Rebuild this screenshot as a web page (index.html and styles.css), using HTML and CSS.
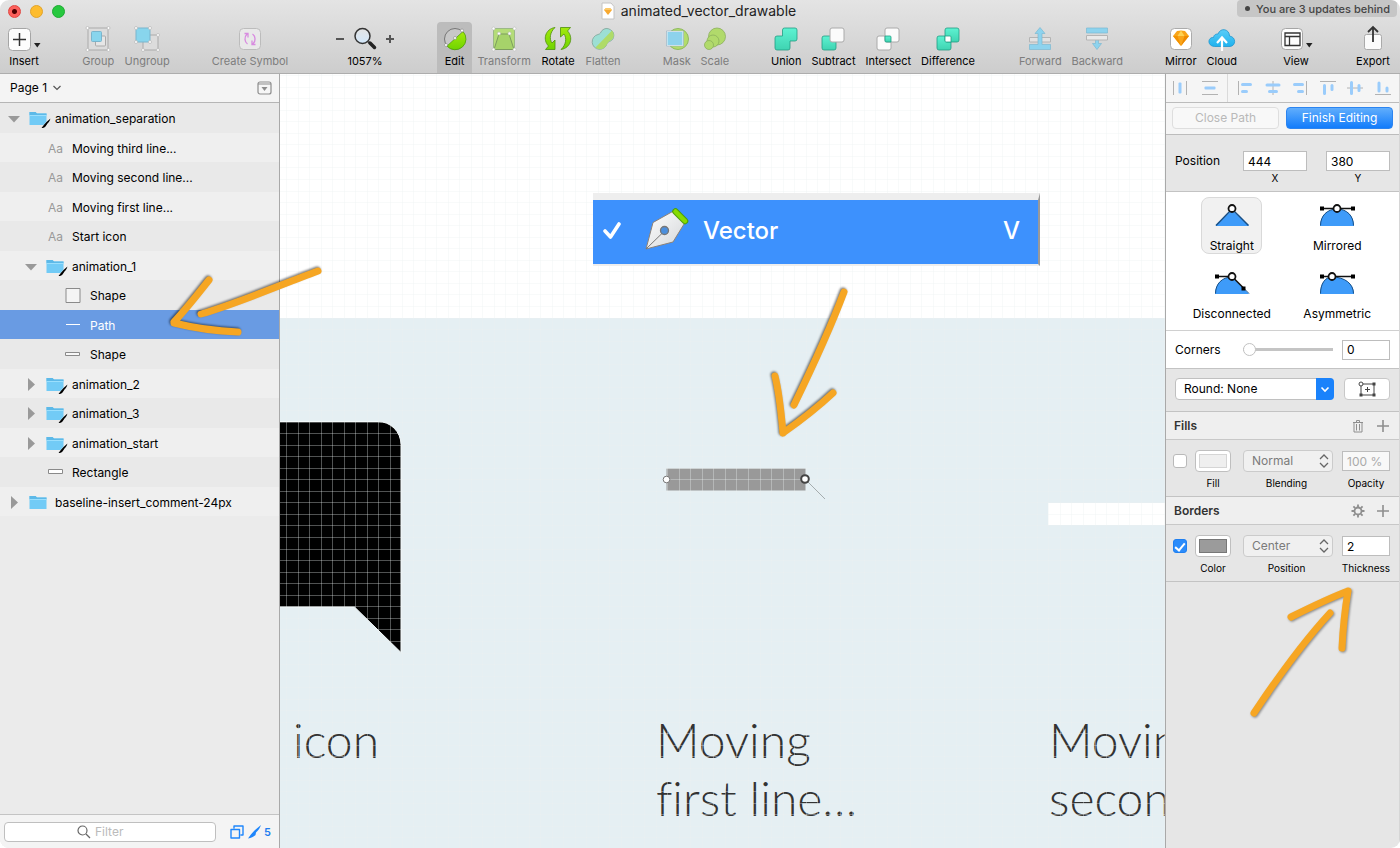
FILE: index.html
```html
<!DOCTYPE html>
<html lang="en">
<head>
<meta charset="utf-8">
<meta name="viewport" content="width=device-width, initial-scale=1">
<title>animated_vector_drawable</title>
<link rel="stylesheet" href="styles.css">
</head>
<body>
<svg class="defs" aria-hidden="true">
  <defs>
    <linearGradient id="lime" x1="0" y1="0" x2="0" y2="1"><stop offset="0" stop-color="#a4ea0c"/><stop offset="1" stop-color="#6fd400"/></linearGradient>
    <linearGradient id="mint" x1="0" y1="0" x2="0" y2="1"><stop offset="0" stop-color="#5ef3d2"/><stop offset="1" stop-color="#3fd3b1"/></linearGradient>
    <linearGradient id="sky" x1="0" y1="0" x2="0" y2="1"><stop offset="0" stop-color="#5bcdf8"/><stop offset="1" stop-color="#1fb2ee"/></linearGradient>
    <linearGradient id="nib" x1="0" y1="0" x2="1" y2="1"><stop offset="0" stop-color="#ffffff"/><stop offset="1" stop-color="#d3d6d8"/></linearGradient>
    <linearGradient id="lens" x1="0" y1="0" x2="0" y2="1"><stop offset="0" stop-color="#e4e4e4"/><stop offset="1" stop-color="#d3e8fb"/></linearGradient>
    <pattern id="pixel-grid" x="6" y="1" width="231" height="231" patternUnits="userSpaceOnUse">
      <path d="M.5 0v231M12.5 0v231M23.5 0v231M35.5 0v231M46.5 0v231M58.5 0v231M69.5 0v231M81.5 0v231M92.5 0v231M104.5 0v231M116.5 0v231M127.5 0v231M139.5 0v231M150.5 0v231M162.5 0v231M173.5 0v231M185.5 0v231M196.5 0v231M208.5 0v231M219.5 0v231M0 .5h231M0 12.5h231M0 23.5h231M0 35.5h231M0 46.5h231M0 58.5h231M0 69.5h231M0 81.5h231M0 92.5h231M0 104.5h231M0 116.5h231M0 127.5h231M0 139.5h231M0 150.5h231M0 162.5h231M0 173.5h231M0 185.5h231M0 196.5h231M0 208.5h231M0 219.5h231" stroke="#ebf0f2" stroke-opacity=".34"/>
    </pattern>
    <symbol id="folder" viewBox="0 0 22 20">
      <path d="M.5 3h6l1.500 1.500h9.500v11.500H.5z" fill="#72cbf6"/><path d="M.5 3h6l1.500 1.500h9.500V6H.5z" fill="#5db9e8"/><path d="M.5 6.500h17" stroke="#9bdffd"/>
    </symbol>
    <symbol id="folder-knife" viewBox="0 0 22 20">
      <use href="#folder" width="22" height="20"/>
      <path d="M21.500 9.500c-1 3-2 4-3 5l-2 3c-1 1-2.500 1.500-4 1.500 1.500-2 3-4 5-6z" fill="#000" stroke="#f4f4f4" stroke-width=".8" paint-order="stroke"/>
    </symbol>
  </defs>
</svg>

<div class="window">
  <header class="header">
    <div class="titlebar">
      <div class="lights">
        <button class="light close" aria-label="Close"></button>
        <button class="light minimise" aria-label="Minimise"></button>
        <button class="light expand" aria-label="Full screen"></button>
      </div>
      <h1 class="title">
        <svg width="14" height="18" viewBox="0 0 14 18"><path d="M1 1h9l3 3.500v12.500H1z" fill="#fff" stroke="#c4c4c4"/><path d="M3 8l2-2h4l2 2-4 5z" fill="#f8a930"/><path d="M3 8h8L9 6H5z" fill="#fcc968"/></svg>
        animated_vector_drawable
      </h1>
      <button class="updates"><span class="dot"></span>You are 3 updates behind</button>
    </div>

    <nav class="toolbar" aria-label="Tools">
      <button class="tool">
        <svg width="36" height="28"><rect x="2.500" y="3.500" width="22" height="22" rx="4" fill="#fdfdfd" stroke="#a5a5a5"/><path d="M13.500 8v13M7 14.500h13" stroke="#333" stroke-width="1.500"/><path d="M28 18h6.500l-3.250 4.500z" fill="#222"/></svg>
        <span>Insert</span>
      </button>
      <i></i>
      <div class="group">
        <button class="tool" disabled>
          <svg width="28" height="28"><path d="M4 3h20v22H4z" fill="#dcdcdc" stroke="#aaa"/><rect x="11.500" y="11" width="10" height="10" rx="1" fill="#e6e6e6" stroke="#aaa"/><rect x="7.500" y="6.500" width="10" height="10" rx="1" fill="#88d5ed" stroke="#7ab5cd"/><g fill="#fff" stroke="#bbb" stroke-width=".8"><circle cx="3.500" cy="3" r="1.500"/><circle cx="24.500" cy="3" r="1.500"/><circle cx="3.500" cy="25" r="1.500"/><circle cx="24.500" cy="25" r="1.500"/></g></svg>
          <span>Group</span>
        </button>
        <button class="tool" disabled>
          <svg width="28" height="28"><path d="M10 10h15v15H10z" fill="#dcdcdc" stroke="#aaa"/><rect x="3" y="3" width="14" height="14" fill="#88d5ed" stroke="#7ab5cd"/><g fill="#fff" stroke="#bbb" stroke-width=".8"><circle cx="3" cy="3" r="1.500"/><circle cx="17" cy="3" r="1.500"/><circle cx="3" cy="17" r="1.500"/><circle cx="17" cy="17" r="1.500"/><circle cx="25" cy="10" r="1.500"/><circle cx="25" cy="25" r="1.500"/><circle cx="10" cy="25" r="1.500"/></g></svg>
          <span>Ungroup</span>
        </button>
      </div>
      <i></i>
      <button class="tool" disabled>
        <svg width="28" height="28"><rect x="3.500" y="3.500" width="21" height="21" rx="4" fill="#e9e9e9" stroke="#bcbcbc"/><g fill="none" stroke="#d88be0" stroke-width="1.300"><path d="M11.500 19c-3-2-3.500-7-.5-10M8.500 8.500h3.500v4M16.500 9c3 2 3.500 7 .5 10M19.500 19.500h-3.500v-4"/></g></svg>
        <span>Create Symbol</span>
      </button>
      <i></i>
      <div class="tool zoom">
        <div class="zoom-controls">
          <button aria-label="Zoom out"><svg width="10" height="10"><path d="M1 5h8" stroke="#555" stroke-width="2"/></svg></button>
          <svg width="28" height="28"><circle cx="11.500" cy="11" r="7.500" fill="url(#lens)" stroke="#333" stroke-width="1.500"/><path d="M17 16.500l2 2" stroke="#555" stroke-width="2"/><path d="M19 18l4.500 4.500" stroke="#222" stroke-width="3.500" stroke-linecap="round"/></svg>
          <button aria-label="Zoom in"><svg width="10" height="10"><path d="M1 5h8M5 1v8" stroke="#555" stroke-width="2"/></svg></button>
        </div>
        <span>1057%</span>
      </div>
      <i></i>
      <div class="group">
        <button class="tool active" aria-pressed="true">
          <svg width="28" height="28"><circle cx="14" cy="14" r="10.500" fill="#c8c8c8" stroke="#777"/><path d="M6 21A10.800 10.800 0 1 0 22 6.500z" fill="url(#lime)" stroke="#4b9a09" stroke-width=".7"/><g fill="#fff" stroke="#777" stroke-width=".5"><circle cx="21" cy="5.500" r="1.500"/><circle cx="14" cy="13" r="1.500"/><circle cx="5" cy="20" r="1.500"/></g></svg>
          <span>Edit</span>
        </button>
        <button class="tool" disabled>
          <svg width="28" height="28"><path d="M3.500 3.500h21v21h-21z" fill="#b4dc78" stroke="#9cb987"/><path d="M9 9h10l5 15.500H4z" fill="#a6d36a" stroke="#7c9d5e"/><g fill="#fff" stroke="#bbb" stroke-width=".6"><circle cx="3.500" cy="3.500" r="1.500"/><circle cx="24.500" cy="3.500" r="1.500"/><circle cx="3.500" cy="24.500" r="1.500"/><circle cx="24.500" cy="24.500" r="1.500"/><circle cx="9" cy="8.500" r="1.500"/><circle cx="19.500" cy="8.500" r="1.500"/></g></svg>
          <span>Transform</span>
        </button>
        <button class="tool">
          <svg width="28" height="28" fill="url(#lime)" stroke="#4c8f0c" stroke-width=".8"><path d="M11 2.500C1 4 -1.500 15 4.500 21L1.500 24.500H11V15L8 18C5 14 6 7 11 2.500z"/><path d="M17 24.500C27 23 29.500 12 23.500 6L26.500 2.500H16.500V12L20 9C23 13 22 20 17 24.500z"/></svg>
          <span>Rotate</span>
        </button>
        <button class="tool" disabled>
          <svg width="28" height="28"><path d="M13 5.500a7 7 0 0 1 11.500 7c-1 4-5 3.500-6.500 6a7.500 7.500 0 1 1-9-9c2.500-.500 2.500-2 4-4z" fill="#9cdfd4" stroke="#8cafa5"/><path d="M23 5.500c3 4 2 8-1.500 10-2 1-2.500 2-4 4.500-3 5-8 5-11 2.500z" fill="#afdb69"/></svg>
          <span>Flatten</span>
        </button>
      </div>
      <i></i>
      <div class="group">
        <button class="tool" disabled>
          <svg width="28" height="28"><circle cx="15" cy="14" r="10.500" fill="#b3dc6c" stroke="#8fba60"/><rect x="4" y="6.500" width="16" height="14" fill="#8dd2ec" stroke="#eef6f8"/><path d="M3.500 6h17v15h-17z" fill="none" stroke="#8fabc0" stroke-width=".6"/></svg>
          <span>Mask</span>
        </button>
        <button class="tool" disabled>
          <svg width="28" height="28" fill="#b1da6b" stroke="#8bb05c" stroke-width=".8"><circle cx="16" cy="11.500" r="8.500"/><circle cx="12" cy="16" r="6"/><circle cx="8" cy="20" r="4.500"/></svg>
          <span>Scale</span>
        </button>
      </div>
      <i></i>
      <div class="group">
        <button class="tool">
          <svg width="28" height="28"><path d="M12.500 3h10.500q2 0 2 2v9q0 2-2 2h-5v7q0 2-2 2H5q-2 0-2-2v-10q0-2 2-2h5.500V5q0-2 2-2z" fill="url(#mint)" stroke="#229d83" stroke-width=".8"/></svg>
          <span>Union</span>
        </button>
        <button class="tool">
          <svg width="28" height="28"><rect x="3" y="11" width="14" height="14" rx="2" fill="url(#mint)" stroke="#229d83" stroke-width=".8"/><rect x="11" y="3" width="14" height="14" rx="2" fill="#fbfbfb" stroke="#aaa"/></svg>
          <span>Subtract</span>
        </button>
        <button class="tool">
          <svg width="28" height="28"><rect x="3" y="11" width="14" height="14" rx="2" fill="#fbfbfb" stroke="#aaa"/><rect x="11" y="3" width="14" height="14" rx="2" fill="#fbfbfb" stroke="#aaa"/><path d="M11 11h5q1 0 1 1v5h-5q-1 0-1-1z" fill="url(#mint)" stroke="#229d83" stroke-width=".8"/></svg>
          <span>Intersect</span>
        </button>
        <button class="tool">
          <svg width="28" height="28"><rect x="3" y="11" width="14" height="14" rx="2" fill="url(#mint)" stroke="#229d83" stroke-width=".8"/><rect x="11" y="3" width="14" height="14" rx="2" fill="url(#mint)" stroke="#229d83" stroke-width=".8"/><path d="M11 11h5q1 0 1 1v5h-5q-1 0-1-1z" fill="#fff" stroke="#229d83" stroke-width=".8"/></svg>
          <span>Difference</span>
        </button>
      </div>
      <i></i>
      <div class="group">
        <button class="tool" disabled>
          <svg width="28" height="28"><path d="M3.500 12.500h21v4.500h-21z" fill="#e2e2e2" stroke="#b4b4b4"/><path d="M14 2.500l5 6h-3v11h8.500v5h-21v-5H12v-11H9z" fill="#8dd3ee" stroke="#7db9d1" stroke-width=".7"/></svg>
          <span>Forward</span>
        </button>
        <button class="tool" disabled>
          <svg width="28" height="28"><path d="M12.500 14h3v4.500h3L14 24.500l-4.500-6h3z" fill="#8dd3ee" stroke="#7db9d1" stroke-width=".7"/><path d="M3.500 10.500h21v4.500h-21z" fill="#e9e9e9" stroke="#b4b4b4"/><path d="M3.500 3h21v5h-21z" fill="#8dd3ee" stroke="#7db9d1" stroke-width=".7"/></svg>
          <span>Backward</span>
        </button>
      </div>
      <i></i>
      <div class="group">
        <button class="tool">
          <svg width="28" height="28"><rect x="3.500" y="3.500" width="21" height="21" rx="4" fill="#fff" stroke="#ababab"/><path d="M6 11l4-5 4-.500 4 .500 4 5-8 10z" fill="#f9a51a"/><path d="M6 11h4.500L14 21z" fill="#f39200"/><path d="M22 11h-4.500L14 21z" fill="#ee8a00"/><path d="M10.500 11L14 5.500l3.500 5.500z" fill="#fed253"/></svg>
          <span>Mirror</span>
        </button>
        <button class="tool">
          <svg width="28" height="28"><path d="M6.500 21.500C-1 21-.5 12 5.500 12.500 6 9 9 9 10 9c2.500-7 11.500-5 11.500 2 7 1 6.500 10 .5 10.500z" fill="url(#sky)" stroke="#1e95cf" stroke-width=".8"/><path d="M14 26V13.500M9 18l5-5.500 5 5.500" fill="none" stroke="#fff" stroke-width="2.200"/></svg>
          <span>Cloud</span>
        </button>
      </div>
      <i></i>
      <button class="tool">
        <svg width="36" height="28"><rect x="3.500" y="3.500" width="21" height="21" rx="4" fill="#fdfdfd" stroke="#a5a5a5"/><path d="M7 8h15v12.500H7zM7 11.500h15M11.500 11.500v9" fill="none" stroke="#333" stroke-width="1.300"/><path d="M28 18h6.500l-3.250 4.500z" fill="#222"/></svg>
        <span>View</span>
      </button>
      <i></i>
      <button class="tool">
        <svg width="28" height="28"><rect x="5.500" y="9.500" width="17" height="15" rx="2" fill="#fbfbfb" stroke="#aaa"/><path d="M14 17V2.500M9 7l5-5 5 5" fill="none" stroke="#333" stroke-width="1.800"/></svg>
        <span>Export</span>
      </button>
    </nav>
  </header>

  <div class="workspace">
    <aside class="sidebar">
      <div class="page-bar">
        <button class="page-picker">Page 1 <svg width="8" height="6"><path d="M.5 1L4 4.500 7.500 1" fill="none" stroke="#555" stroke-width="1.200"/></svg></button>
        <button class="page-toggle" aria-label="Toggle page list"><svg width="16" height="14"><rect x="1" y="1" width="13" height="12" rx="2" fill="#f6f6f6" stroke="#8d8d8d" stroke-width="1.200"/><path d="M1 3h13" stroke="#8d8d8d"/><path d="M4.500 6h6l-3 4z" fill="#8d8d8d"/></svg></button>
      </div>
      <ul class="layers">
        <li><svg class="tri" viewBox="0 0 16 16"><path d="M2 5h12l-6 6.500z"/></svg><svg class="icon"><use href="#folder-knife"/></svg>animation_separation</li>
        <li class="l1"><span class="tri"></span><span class="icon aa">Aa</span>Moving third line...</li>
        <li class="l1"><span class="tri"></span><span class="icon aa">Aa</span>Moving second line...</li>
        <li class="l1"><span class="tri"></span><span class="icon aa">Aa</span>Moving first line...</li>
        <li class="l1"><span class="tri"></span><span class="icon aa">Aa</span>Start icon</li>
        <li class="l1"><svg class="tri" viewBox="0 0 16 16"><path d="M2 5h12l-6 6.500z"/></svg><svg class="icon"><use href="#folder-knife"/></svg>animation_1</li>
        <li class="l2"><span class="tri"></span><svg class="icon"><path d="M2 2.500h14v14H2z" fill="#f4f4f4" stroke="#8a8a8a"/></svg>Shape</li>
        <li class="l2 selected" aria-selected="true"><span class="tri"></span><svg class="icon"><path d="M2 8.500h14" stroke="#fff"/></svg>Path</li>
        <li class="l2"><span class="tri"></span><svg class="icon"><path d="M1.500 7.500h14v3h-14z" fill="#f8f8f8" stroke="#8a8a8a"/></svg>Shape</li>
        <li class="l1"><svg class="tri" viewBox="0 0 16 16"><path d="M5 1v13l7-6.500z"/></svg><svg class="icon"><use href="#folder-knife"/></svg>animation_2</li>
        <li class="l1"><svg class="tri" viewBox="0 0 16 16"><path d="M5 1v13l7-6.500z"/></svg><svg class="icon"><use href="#folder-knife"/></svg>animation_3</li>
        <li class="l1"><svg class="tri" viewBox="0 0 16 16"><path d="M5 1v13l7-6.500z"/></svg><svg class="icon"><use href="#folder-knife"/></svg>animation_start</li>
        <li class="l1"><span class="tri"></span><svg class="icon"><path d="M2.500 6.500h14v4h-14z" fill="#fff" stroke="#8a8a8a"/></svg>Rectangle</li>
        <li><svg class="tri" viewBox="0 0 16 16"><path d="M5 1v13l7-6.500z"/></svg><svg class="icon"><use href="#folder"/></svg>baseline-insert_comment-24px</li>
      </ul>
      <div class="filter-bar">
        <label class="filter">
          <svg width="14" height="14"><circle cx="5.500" cy="5.500" r="4.500" fill="none" stroke="#666" stroke-width="1.200"/><path d="M9 9l4 4" stroke="#666" stroke-width="1.200"/></svg>
          <input type="text" placeholder="Filter" aria-label="Filter layers">
        </label>
        <button class="filter-toggle" aria-label="Show shapes"><svg width="14" height="14"><path d="M4 3.500V1h9v9h-2.500M1 4.500h8.500v8.500H1z" fill="none" stroke="#1f86fb" stroke-width="1.400" stroke-linejoin="round"/></svg></button>
        <button class="filter-toggle" aria-label="Show slices"><svg width="13" height="14"><path d="M13 0c-1 3-2.500 5-5 7.500L7.500 10c-2 2-4.500 3-7.500 3.500 2-3 4.500-6 7-8.500z" fill="#1f86fb"/></svg>5</button>
      </div>
    </aside>

    <main class="canvas">
      <div class="artboard"></div>
      <svg class="bubble" width="124" height="233"><path d="M-2 .5h100a23 23 0 0 1 23 23V231.500L74.500 186H-2z" fill="#000" stroke="#f5fafb" stroke-width="1"/></svg>
      <div class="strip"></div>
      <p class="caption c1">icon</p>
      <p class="caption c2">Moving<br>first line…</p>
      <p class="caption c3">Moving<br>second line…</p>
      <svg class="bar" width="170" height="40"><path d="M6.500 8.500h139v22h-139z" fill="#999"/></svg>
      <svg class="grid" width="100%" height="100%"><rect width="100%" height="100%" fill="url(#pixel-grid)"/></svg>
      <svg class="bar" width="170" height="40"><path d="M145 19l20 20" stroke="#a5acae"/><circle cx="6.500" cy="19.500" r="3.300" fill="#fff" stroke="#777"/><circle cx="145" cy="19" r="3.800" fill="#fff" stroke="#444" stroke-width="2"/></svg>
      <div class="menu-item">
        <svg width="18" height="20"><path d="M2 10l5.500 6L16 3" fill="none" stroke="#fff" stroke-width="3.600" stroke-linecap="round" stroke-linejoin="round"/></svg>
        <svg width="46" height="46"><path d="M3 41L10 14.500 30.500 3 42 14.500 30 34z" fill="url(#nib)" stroke="#8c8278"/><path d="M3 41L22 22.500" stroke="#777"/><circle cx="21.500" cy="22.500" r="4" fill="#4b8fdd" stroke="#777" stroke-width="1.300"/><path d="M32.500 3.500L42 13" stroke="#4c9d0a" stroke-width="6.500" stroke-linecap="round"/><path d="M32.500 3.500L42 13" stroke="#86dc00" stroke-width="4.500" stroke-linecap="round"/></svg>
        <span>Vector</span><kbd>V</kbd>
      </div>
      <svg class="arrow arrow-bar" width="80" height="160"><path d="M74 12C62 44 42 88 24 125M5 96c4 16 6 34 8 57M13 153c17-12 34-25 50-40"/></svg>
    </main>

    <aside class="inspector">
      <div class="align-bar">
        <div class="distribute">
          <button aria-label="Distribute horizontally"><svg width="16" height="16"><path d="M1.500 1v14M14.500 1v14" stroke="#b2b2b2"/><rect x="6.500" y="2.500" width="3" height="11" rx="1" fill="#9accfb"/></svg></button>
          <button aria-label="Distribute vertically"><svg width="16" height="16"><path d="M0 1.500h16M0 14.500h16" stroke="#b2b2b2"/><rect x="2.500" y="6.500" width="11" height="3" rx="1" fill="#9accfb"/></svg></button>
        </div>
        <div class="align">
          <button aria-label="Align left"><svg width="16" height="16"><path d="M1.500 1v14" stroke="#b2b2b2"/><path d="M5.500 4.500h8M5.500 11.500h4" stroke="#9accfb" stroke-width="3" stroke-linecap="round"/></svg></button>
          <button aria-label="Align centre"><svg width="16" height="16"><path d="M8 1v14" stroke="#b2b2b2"/><path d="M2 5h12M4.500 11.500h7" stroke="#9accfb" stroke-width="3" stroke-linecap="round"/></svg></button>
          <button aria-label="Align right"><svg width="16" height="16"><path d="M14.500 1v14" stroke="#b2b2b2"/><path d="M2.500 4.500h8M6.500 11.500h4" stroke="#9accfb" stroke-width="3" stroke-linecap="round"/></svg></button>
          <button aria-label="Align top"><svg width="16" height="16"><path d="M0 1.500h16" stroke="#b2b2b2"/><path d="M4.500 5.500v8M12 5.500v4" stroke="#9accfb" stroke-width="3" stroke-linecap="round"/></svg></button>
          <button aria-label="Align middle"><svg width="16" height="16"><path d="M0 8h16" stroke="#b2b2b2"/><path d="M4.500 2.500v11M12 5.500v5" stroke="#9accfb" stroke-width="3" stroke-linecap="round"/></svg></button>
          <button aria-label="Align bottom"><svg width="16" height="16"><path d="M0 14.500h16" stroke="#b2b2b2"/><path d="M4 3v8M12 8v3" stroke="#9accfb" stroke-width="3" stroke-linecap="round"/></svg></button>
        </div>
      </div>
      <div class="edit-bar">
        <button class="btn" disabled>Close Path</button>
        <button class="btn primary">Finish Editing</button>
      </div>
      <section class="position-row">
        <span class="row-label">Position</span>
        <div class="field"><input id="pos-x" class="num" value="444"><label for="pos-x">X</label></div>
        <div class="field"><input id="pos-y" class="num" value="380"><label for="pos-y">Y</label></div>
      </section>
      <section class="point-types">
        <button class="point on" aria-pressed="true"><svg width="38" height="26"><path d="M2.500 24L19 8l17 16z" fill="#3e9bf9"/><path d="M3 23.500L19 7l16.500 16.500" fill="none" stroke="#174f86" stroke-width="1.500"/><circle cx="19" cy="6.500" r="3.500" fill="#fff" stroke="#111" stroke-width="1.800"/></svg>Straight</button>
        <button class="point"><svg width="38" height="26"><path d="M2 24C2 14 9 7 19 7s17 7 17 17z" fill="#3e9bf9"/><path d="M2.500 23.500C2.500 14 9 7 19 7s16.500 7 16.500 16.500" fill="none" stroke="#174f86"/><path d="M3 6.500h32" stroke="#111" stroke-width="1.500"/><path d="M2 4.500h4v4H2zM33 4.500h4v4h-4z"/><circle cx="19" cy="6.500" r="3.500" fill="#fff" stroke="#111" stroke-width="1.800"/></svg>Mirrored</button>
        <button class="point"><svg width="38" height="26"><path d="M2 24C2 14 9 7 19 7l17 17z" fill="#3e9bf9"/><path d="M2.500 23.500C2.500 14 9 7 19 7M31 18.500l5 5" fill="none" stroke="#174f86"/><path d="M3 6.500h16l12 12" fill="none" stroke="#111" stroke-width="1.500"/><path d="M2 4.500h4v4H2zM28.500 16.500h4v4h-4z"/><circle cx="19" cy="6.500" r="3.500" fill="#fff" stroke="#111" stroke-width="1.800"/></svg>Disconnected</button>
        <button class="point"><svg width="38" height="26"><path d="M2 24C2 14 7 7 14 7c13 0 22 7 22 17z" fill="#3e9bf9"/><path d="M2.500 23.500C2.500 14 7 7 14 7c13 0 21.500 7 21.500 16.500" fill="none" stroke="#174f86"/><path d="M4 6.500h31" stroke="#111" stroke-width="1.500"/><path d="M2 4.500h4v4H2zM33 4.500h4v4h-4z"/><circle cx="14" cy="6.500" r="3.500" fill="#fff" stroke="#111" stroke-width="1.800"/></svg>Asymmetric</button>
      </section>
      <section class="corners-row">
        <label class="row-label" for="corner-range">Corners</label>
        <input id="corner-range" class="slider" type="range" min="0" max="100" value="0">
        <input class="num" value="0" aria-label="Corner radius">
      </section>
      <section class="round-row">
        <div class="select combo">
          <select aria-label="Rounding"><option>Round: None</option></select>
          <svg width="18" height="22"><path d="M0 0h14a4 4 0 0 1 4 4v14a4 4 0 0 1-4 4H0z" fill="#1a82fb"/><path d="M5.500 9.500L9 13l3.500-3.500" fill="none" stroke="#fff" stroke-width="1.600"/></svg>
        </div>
        <button class="btn frame" aria-label="Edit frame"><svg width="18" height="16"><path d="M3 3h13v11H3z" fill="none" stroke="#444"/><path d="M9.500 6v5M7 8.500h5" stroke="#444"/><path d="M14.500 1.500h3v3h-3zM14.500 12.500h3v3h-3zM1.500 12.500h3v3h-3z" fill="#444"/><circle cx="3" cy="3" r="2" fill="#fff" stroke="#444"/></svg></button>
      </section>
      <div class="section-head">
        <h2>Fills</h2>
        <button aria-label="Remove fills"><svg width="14" height="14"><path d="M3 3.500h8v9.500H3zM2 3.500h10M5.500 3V1.500h3V3M5.500 5v6.500M8.500 5v6.500" fill="none" stroke="#8e8e8e"/></svg></button>
        <button aria-label="Add fill"><svg width="14" height="14"><path d="M7 1v12M1 7h12" stroke="#8e8e8e" stroke-width="1.600"/></svg></button>
      </div>
      <section class="paint">
        <input type="checkbox" aria-label="Enable fill">
        <button id="fill-color" class="swatch" disabled><span></span></button>
        <div class="select">
          <select id="blend" disabled><option>Normal</option></select>
          <svg width="12" height="16"><path d="M2 6L6 2l4 4M2 10L6 14l4-4" fill="none" stroke="#666" stroke-width="1.300"/></svg>
        </div>
        <input id="opacity" class="num" value="100 %" disabled>
        <label class="under-swatch" for="fill-color">Fill</label><label for="blend">Blending</label><label for="opacity">Opacity</label>
      </section>
      <div class="section-head">
        <h2>Borders</h2>
        <button aria-label="Border settings"><svg width="14" height="14"><circle cx="7" cy="7" r="3.500" fill="none" stroke="#8e8e8e" stroke-width="1.800"/><path d="M7 .5v2.500M7 11v2.500M.5 7h2.500M11 7h2.500M2.400 2.400l1.800 1.800M9.800 9.800l1.800 1.800M2.400 11.600l1.800-1.800M9.800 4.200l1.800-1.800" stroke="#8e8e8e" stroke-width="1.800"/></svg></button>
        <button aria-label="Add border"><svg width="14" height="14"><path d="M7 1v12M1 7h12" stroke="#8e8e8e" stroke-width="1.600"/></svg></button>
      </div>
      <section class="paint">
        <input type="checkbox" checked aria-label="Enable border">
        <button id="border-color" class="swatch filled"><span></span></button>
        <div class="select">
          <select id="border-pos" disabled><option>Center</option></select>
          <svg width="12" height="16"><path d="M2 6L6 2l4 4M2 10L6 14l4-4" fill="none" stroke="#666" stroke-width="1.300"/></svg>
        </div>
        <input id="thickness" class="num" value="2">
        <label class="under-swatch" for="border-color">Color</label><label for="border-pos">Position</label><label for="thickness">Thickness</label>
      </section>
      <svg class="arrow arrow-thickness" width="120" height="150"><path d="M90 34C66 60 38 98 14 134M51 38c18-9 36-18 57-26M108 12c-3 18-5 36-6 57"/></svg>
    </aside>
    <svg class="arrow arrow-path" width="170" height="90"><path d="M158 11C120 25 76 44 41 54M49 20C38 34 27 48 14 62M14 63c20 5 40 8 64 9"/></svg>
  </div>
</div>
</body>
</html>
```
FILE: styles.css
```css
* { box-sizing: border-box; }

body {
  margin: 0;
  background: #fff;
  color: #000;
  font: 12px/16px Inter, "Liberation Sans", sans-serif;
}

button, input, select { font: inherit; color: inherit; }
button { padding: 0; border: 0; background: none; }
h1, h2, p, ul { margin: 0; padding: 0; font-weight: 400; }
svg { display: block; flex: none; }
.defs { position: absolute; width: 0; height: 0; }

.window {
  display: flex;
  flex-direction: column;
  min-height: 100vh;
  border-radius: 9px;
  overflow: hidden;
}

/* Header */
.header {
  border-bottom: 1px solid #adadad;
  background: linear-gradient(#e4e4e4, #cdcdcd);
}
.titlebar {
  display: grid;
  grid-template-columns: 1fr auto 1fr;
  align-items: center;
  height: 22px;
  padding: 0 3px 0 8px;
}
.lights { display: flex; gap: 9px; }
.light { width: 13px; height: 13px; border-radius: 50%; }
.close { border: 1px solid #e1443e; background: radial-gradient(circle, #4d0000 0 2px, #fc605c 3px); }
.minimise { border: 1px solid #e0a32c; background: #fdbc2e; }
.expand { border: 1px solid #1fab33; background: #27c83f; }
.title {
  display: flex;
  align-items: center;
  gap: 6px;
  padding-right: 8px;
  font-size: 14px;
  color: #222;
}
.updates {
  display: flex;
  align-items: center;
  justify-self: end;
  align-self: start;
  gap: 6px;
  height: 17px;
  padding: 0 7px 0 8px;
  border-radius: 4px;
  background: #c6c6c6;
  color: #444;
  font-size: 11px;
  font-weight: 500;
}
.dot { width: 5px; height: 5px; border-radius: 50%; background: #444; }

.toolbar {
  display: grid;
  grid-template-columns:
    48px 29fr 98px 25fr 100px 30fr 70px 37fr 189px 32fr 76px 32fr
    214px 34fr 114px 32fr 82px 24fr 60px 20fr 54px;
  height: 51px;
}
.group { display: flex; justify-content: space-between; }
.tool {
  display: flex;
  flex: 1 1 auto;
  flex-direction: column;
  align-items: center;
  gap: 1px;
  padding-top: 3px;
  font-size: 11px;
  line-height: 14px;
  white-space: nowrap;
}
.tool:disabled { color: #7d7d7d; }
.active { flex: 0 0 35px; border-radius: 4px 4px 0 0; background: #bcbcbc; }
.zoom-controls { display: flex; align-items: center; gap: 6px; }

/* Layer list */
.workspace { position: relative; display: flex; flex: 1; }
.sidebar {
  display: flex;
  flex-direction: column;
  flex: 0 0 280px;
  border-right: 1px solid #a9a9a9;
  background: #ebebeb;
}
.page-bar {
  display: flex;
  align-items: center;
  justify-content: space-between;
  height: 29px;
  padding: 0 6px 0 10px;
  border-bottom: 1px solid #b5b5b5;
  background: #f4f4f4;
}
.page-picker { display: flex; align-items: center; gap: 6px; }
.layers { flex: 1; list-style: none; }
.layers li {
  display: flex;
  align-items: center;
  height: 29px;
  padding: 2px 0 0 6px;
  background: #efefef;
}
.layers li:nth-child(odd) { height: 30px; background: #e9e9e9; }
.layers .l1 { padding-left: 23px; }
.layers .l2 { padding-left: 41px; }
.layers .selected { background: #699be3; color: #fff; }
.tri { flex: none; width: 16px; height: 16px; margin-right: 7px; fill: #999; }
.icon { flex: none; width: 22px; height: 20px; margin-right: 4px; }
.aa { padding-left: 2px; color: #999; line-height: 20px; }

.filter-bar {
  display: flex;
  align-items: center;
  height: 34px;
  padding: 0 8px 0 4px;
  border-top: 1px solid #c4c4c4;
  background: #f4f4f4;
}
.filter {
  display: flex;
  align-items: center;
  flex: 1;
  gap: 4px;
  height: 20px;
  margin-right: 14px;
  padding-left: 72px;
  border: 1px solid #bfbfbf;
  border-radius: 4px;
  background: #fff;
}
.filter input { width: 100%; padding: 0; border: 0; outline: 0; background: none; }
.filter input::placeholder { color: #bbb; }
.filter-toggle {
  display: flex;
  align-items: center;
  gap: 3px;
  margin-right: 4px;
  color: #1f7df0;
  font-size: 11px;
  font-weight: 600;
}
.filter-toggle:last-child { margin-right: 0; }

/* Canvas: objects sit at free positions */
.canvas { position: relative; flex: 1; min-width: 0; overflow: hidden; background: #fff; }
.artboard { position: absolute; inset: 244px 0 0 0; background: #e5eff3; }
.bubble { position: absolute; left: 0; top: 347px; }
.strip { position: absolute; left: 768px; right: 0; top: 429px; height: 22px; background: #fff; }
.bar { position: absolute; left: 380px; top: 386px; }
.grid { position: absolute; inset: 0; }
.caption {
  position: absolute;
  top: 637px;
  color: #333;
  font: 300 48px/58px Lato, "Open Sans", sans-serif;
  font-variant-ligatures: none;
  white-space: nowrap;
}
.c1 { left: 13px; }
.c2 { left: 376px; }
.c3 { left: 769px; }
.menu-item {
  position: absolute;
  left: 313px;
  top: 119px;
  display: flex;
  align-items: center;
  width: 447px;
  height: 73px;
  padding: 0 18px 2px 10px;
  border-top: 7px solid #eee;
  border-right: 2px solid #999;
  border-bottom: 2px solid #eee;
  background: #3d91fd;
  color: #fff;
  font-size: 24px;
  font-weight: 500;
  line-height: 32px;
}
.menu-item svg + svg { margin: 0 14px 0 22px; }
.menu-item kbd { margin-left: auto; font: inherit; }

.arrow {
  position: absolute;
  fill: none;
  stroke: #f6a623;
  stroke-width: 7px;
  stroke-linecap: round;
  stroke-linejoin: round;
  filter: drop-shadow(-1px -1px 1px #0008);
  pointer-events: none;
}
.arrow-path { left: 160px; top: 186px; }
.arrow-bar { left: 490px; top: 206px; }
.arrow-thickness { right: 39px; top: 505px; filter: drop-shadow(1px 1px 1px #0006); }

/* Inspector */
.inspector {
  position: relative;
  flex: 0 0 235px;
  min-width: 0;
  border-left: 1px solid #a9a9a9;
  border-right: 1px solid #d6d6d6;
  background: #e6e6e6;
}
.align-bar {
  display: flex;
  height: 29px;
  border-bottom: 1px solid #bcbcbc;
  background: #f5f5f5;
}
.align-bar > div { display: flex; align-items: center; justify-content: space-between; }
.distribute { width: 62px; padding: 0 9px 0 6px; border-right: 1px solid #dadada; }
.align { flex: 1; padding: 0 8px 0 9px; }
.edit-bar {
  display: flex;
  gap: 7px;
  height: 32px;
  padding: 4px 6px;
  border-bottom: 1px solid #bcbcbc;
  background: #f5f5f5;
}
.btn {
  flex: 1;
  min-width: 0;
  height: 22px;
  border: 1px solid #c8c8c8;
  border-radius: 4px;
  background: #fff;
}
.btn:disabled { border-color: #dedede; background: #f8f8f8; color: #b9b9b9; }
.primary { border-color: #2b84f0; background: linear-gradient(#61aefc, #127cfb); color: #fff; }

.row-label { flex: 0 0 68px; }
.num {
  width: 100%;
  min-width: 0;
  height: 20px;
  padding: 0 4px;
  border: 1px solid #bdbdbd;
  border-radius: 0;
  background: #fff;
}
.num:disabled { background: #f8f8f8; color: #aaa; }
.position-row {
  display: flex;
  height: 57px;
  padding: 16px 9px 0;
  border-bottom: 1px solid #c3c3c3;
}
.position-row .row-label { line-height: 20px; }
.field { flex: 1; min-width: 0; text-align: center; }
.field + .field { margin-left: 19px; }
.field label { display: block; font-size: 10px; line-height: 14px; }

.point-types {
  display: grid;
  grid-template-columns: 1fr 1fr;
  gap: 11px 0;
  justify-items: center;
  padding: 5px 9px 8px 13px;
  border-bottom: 1px solid #d0d0d0;
  background: #fff;
}
.point {
  display: flex;
  flex-direction: column;
  align-items: center;
  gap: 10px;
  width: 61px;
  height: 57px;
  padding-top: 4px;
  border: 1px solid transparent;
  border-radius: 8px;
  white-space: nowrap;
}
.point svg { overflow: visible; }
.point.on { border-color: #d9d9d9; background: #f1f1f1; }

.corners-row {
  display: flex;
  align-items: center;
  height: 38px;
  padding: 0 9px;
  border-bottom: 1px solid #c3c3c3;
  background: #fff;
}
.corners-row .num { flex: 0 0 48px; }
.slider {
  flex: 1;
  min-width: 0;
  height: 14px;
  margin: 0 9px 0 0;
  appearance: none;
  background: linear-gradient(#c4c4c4, #c4c4c4) center / 100% 3px no-repeat;
}
.slider::-webkit-slider-thumb {
  width: 13px;
  height: 13px;
  border: 1px solid #c2c2c2;
  border-radius: 50%;
  appearance: none;
  background: #fff;
}

.round-row { display: flex; gap: 10px; height: 43px; padding: 9px 9px 0; border-bottom: 1px solid #c3c3c3; }
.round-row .frame { display: grid; place-items: center; flex: 0 0 46px; }
.select { position: relative; height: 22px; }
.select select {
  width: 100%;
  height: 22px;
  padding: 0 8px;
  border: 1px solid #cbcbcb;
  border-radius: 4px;
  appearance: none;
  background: #f0f0f0;
  opacity: 1;
}
.select select:disabled { color: #7b7b7b; }
.select svg { position: absolute; right: 3px; top: 3px; }
.combo { flex: 1; }
.combo select { background: #fff; border-color: #c0c0c0; }
.combo svg { right: 0; top: 0; }

.section-head {
  display: flex;
  align-items: center;
  gap: 11px;
  height: 28px;
  padding: 0 9px 0 8px;
  border-bottom: 1px solid #c8c8c8;
  background: #efefef;
}
.section-head h2 { flex: 1; color: #333; font-size: 12px; font-weight: 600; line-height: 16px; }
.paint {
  display: grid;
  grid-template-columns: 22px 36px 1fr 48px;
  grid-template-rows: 24px 20px;
  align-items: center;
  height: 57px;
  padding: 9px 9px 0 7px;
  border-bottom: 1px solid #c3c3c3;
}
.paint .select { margin: 0 9px 0 12px; }
.paint label { font-size: 10px; line-height: 12px; justify-self: center; white-space: nowrap; }
.under-swatch { grid-column: 2; }
.swatch { height: 22px; padding: 3px; border: 1px solid #bfbfbf; border-radius: 4px; background: #fff; }
.swatch span { display: block; height: 14px; border: 1px solid #d5d5d5; background: #efefef; }
.filled span { border-color: #777; background: #9b9b9b; }
.paint input[type="checkbox"] {
  width: 14px;
  height: 14px;
  margin: 0;
  border: 1px solid #b9b9b9;
  border-radius: 3px;
  appearance: none;
  background: #fff;
}
.paint input[type="checkbox"]:checked { display: grid; place-items: center; border-color: #1f7ff0; background: #2b8cfb; }
.paint input:checked::before {
  content: "";
  width: 4px;
  height: 8px;
  border: solid #fff;
  border-width: 0 2px 2px 0;
  transform: rotate(40deg);
}
```
